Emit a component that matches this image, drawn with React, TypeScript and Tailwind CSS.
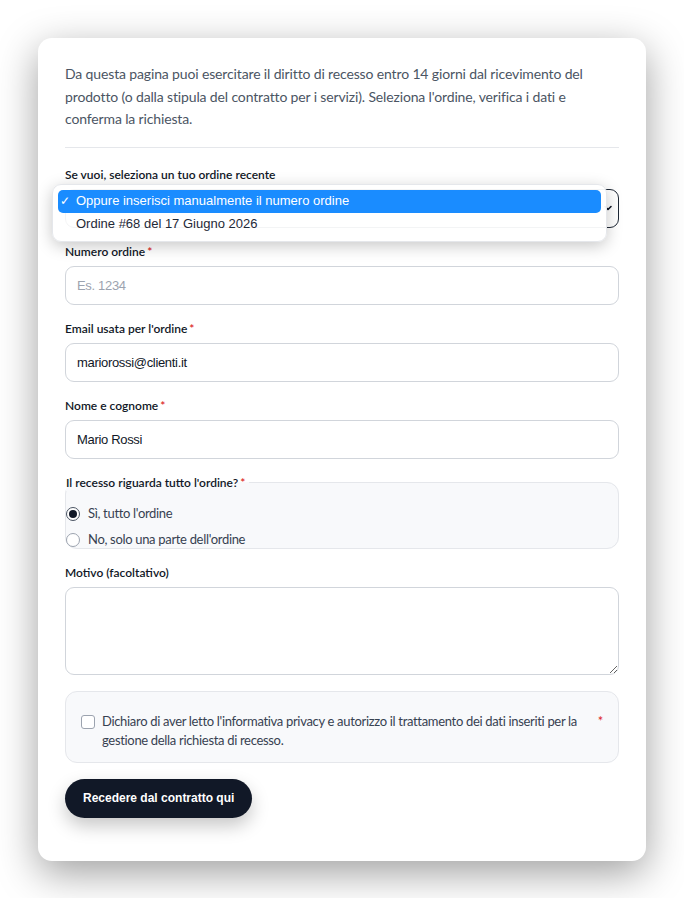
import React from "react";

function Label({ children, required }: { children: React.ReactNode; required?: boolean }) {
  return (
    <div className="mb-[6px] text-[12px] font-semibold leading-4 tracking-normal text-[#111827]">
      {children}
      {required && <span className="ml-[2px] text-[#dc2626]">*</span>}
    </div>
  );
}

function Field({
  label,
  required,
  placeholder,
  value,
}: {
  label: string;
  required?: boolean;
  placeholder?: string;
  value?: string;
}) {
  return (
    <div>
      <Label required={required}>{label}</Label>
      <input
        readOnly
        defaultValue={value}
        placeholder={placeholder}
        className="block h-[39px] w-full rounded-[9px] border border-[#d1d5db] bg-white px-[11px] font-['Liberation_Sans',Arial,sans-serif] text-[13px] text-[#111827] outline-none placeholder:text-[#9ca3af]"
      />
    </div>
  );
}

function Radio({ label, checked }: { label: string; checked?: boolean }) {
  return (
    <div className="flex h-[16px] items-center gap-[8px]">
      <span
        className={
          checked
            ? "flex h-[14px] w-[14px] items-center justify-center rounded-full border border-[#4b5563] bg-white"
            : "flex h-[14px] w-[14px] items-center justify-center rounded-full border border-[#9ca3af] bg-white"
        }
      >
        {checked && <span className="h-[8px] w-[8px] rounded-full bg-[#111827]" />}
      </span>
      <span className="text-[13px] text-[#374151]">{label}</span>
    </div>
  );
}

export default function App() {
  return (
    <div className="min-h-screen bg-white px-[38px] pt-[38px] pb-[38px] font-['Lato','Noto_Sans',sans-serif] tracking-[-0.02em]">
      <div className="rounded-[14px] bg-white px-[27px] pt-[25px] pb-[43px] shadow-[0_12px_40px_rgba(0,0,0,0.38)]">
        <p className="text-[14px] leading-[22.5px] tracking-[-0.01em] text-[#4b5563]">
          Da questa pagina puoi esercitare il diritto di recesso entro 14 giorni dal ricevimento del
          prodotto (o dalla stipula del contratto per i servizi). Seleziona l'ordine, verifica i dati e
          conferma la richiesta.
        </p>

        <div className="mt-[16px] border-t border-[#e5e7eb]" />

        <div className="mt-[19px] flex flex-col gap-[16px]">
          {/* Recent order select, shown open */}
          <div>
            <Label>Se vuoi, seleziona un tuo ordine recente</Label>
            <div className="relative">
              <div className="flex h-[39px] items-center justify-end rounded-[9px] border border-[#1f2937] bg-white pr-[5px]">
                <svg width="10" height="10" viewBox="0 0 10 10" fill="none">
                  <path d="M2 3.5 L5 6.5 L8 3.5" stroke="#111827" strokeWidth="1.6" strokeLinecap="round" strokeLinejoin="round" />
                </svg>
              </div>
              <div className="absolute left-[-13px] top-[-5px] h-[58px] w-[555px] rounded-[9px] border border-[#e5e7eb] bg-white/95 p-[5px] font-['Liberation_Sans',Arial,sans-serif] text-[13px] tracking-normal shadow-[0_4px_16px_rgba(0,0,0,0.22)]">
                <div className="flex h-[23px] items-center rounded-[5px] bg-[#1a8cff] pl-[2px] text-white">
                  <span className="w-[16px] text-[12px]">✓</span>
                  <span>Oppure inserisci manualmente il numero ordine</span>
                </div>
                <div className="flex h-[23px] items-center pl-[18px] text-[#1f2937]">Ordine #68 del 17 Giugno 2026</div>
              </div>
            </div>
          </div>

          <Field label="Numero ordine" required placeholder="Es. 1234" />
          <Field label="Email usata per l'ordine" required value="mariorossi@clienti.it" />
          <Field label="Nome e cognome" required value="Mario Rossi" />

          <fieldset className="rounded-[12px] border border-[#e5e7eb] bg-[#f8f9fb]">
            <legend className="pr-[4px] text-[12px] font-semibold leading-4 tracking-normal text-[#111827]">
              Il recesso riguarda tutto l'ordine?<span className="ml-[2px] text-[#dc2626]">*</span>
            </legend>
            <div className="mt-[15px] flex flex-col gap-[10px]">
              <Radio label="Sì, tutto l'ordine" checked />
              <Radio label="No, solo una parte dell'ordine" />
            </div>
          </fieldset>

          <div>
            <Label>Motivo (facoltativo)</Label>
            <textarea
              readOnly
              className="block h-[88px] w-full resize-y rounded-[9px] border border-[#d1d5db] bg-white outline-none"
            />
          </div>

          <div className="flex items-start rounded-[12px] border border-[#e5e7eb] bg-[#f8f9fb] pt-[20px] pb-[12px] pl-[15px] pr-[15px]">
            <span className="mt-[3px] h-[14px] w-[14px] shrink-0 rounded-[3px] border border-[#9ca3af] bg-white" />
            <span className="ml-[7px] flex-1 text-[13px] leading-[19px] text-[#374151]">
              Dichiaro di aver letto l'informativa privacy e autorizzo il trattamento dei dati inseriti per la
              gestione della richiesta di recesso.
            </span>
            <span className="ml-[8px] text-[13px] leading-[19px] text-[#dc2626]">*</span>
          </div>

          <div>
            <button className="h-[39px] rounded-full bg-[#111827] px-[18px] font-['Liberation_Sans',Arial,sans-serif] text-[12px] font-bold tracking-normal text-white shadow-[0_8px_18px_rgba(0,0,0,0.22)]">
              Recedere dal contratto qui
            </button>
          </div>
        </div>
      </div>
    </div>
  );
}
